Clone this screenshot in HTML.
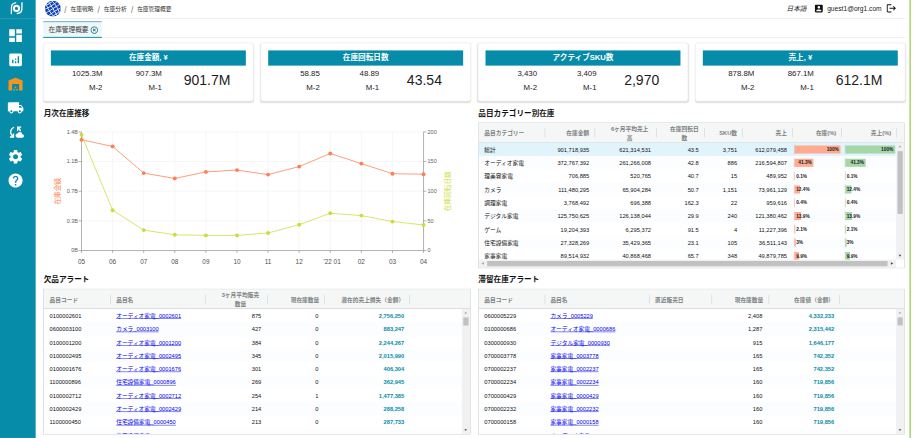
<!DOCTYPE html><html lang="ja"><head><meta charset="utf-8"><title>在庫管理概要</title><style>
*{box-sizing:border-box;margin:0;padding:0}
html,body{width:913px;height:438px;overflow:hidden;background:#fff}
body{font-family:"Liberation Sans", "Noto Sans CJK JP", sans-serif;color:#222;}
#root{position:absolute;left:0;top:0;width:1920px;height:921px;transform:scale(0.475521);transform-origin:0 0;background:#fff;overflow:hidden}
.abs{position:absolute}
#side{position:absolute;left:0;top:0;width:75.3px;height:921px;background:#068ca8}
#side svg{position:absolute;fill:#fff}
.sdiv{position:absolute;left:0;top:38.2px;width:75.3px;height:1px;background:rgba(255,255,255,.28)}
#hdrline{position:absolute;left:84px;top:38.6px;width:1820px;height:1px;background:#dcdcdc}
.bc{position:absolute;top:10px;font-size:12px;line-height:20px;color:#333;white-space:nowrap}
.bc.sl{font-size:17.5px;color:#777;top:10.5px}
#tabline{position:absolute;left:91px;top:78.6px;width:1813px;height:1px;background:#dedede}
#tab{position:absolute;left:91px;top:45px;width:123px;height:35px;background:#edf6f8;border-top:2px solid #62b4c6;transform:translateY(-.4px);border-bottom:2px solid #068ca8;font-size:14px;line-height:31px;padding-left:11px;color:#3c3c3c;white-space:nowrap}
.card{position:absolute;top:90px;width:442px;height:123px;border:1px solid #ededed;border-radius:6px;background:#fff;box-shadow:0 2px 3px rgba(0,0,0,.13)}
.card .h{position:absolute;left:15px;top:14.5px;width:410px;height:32px;background:#068ca8;color:#fff;font-weight:bold;font-size:16px;line-height:31px;text-align:center}
.card .v{position:absolute;font-size:16.5px;line-height:20px;text-align:right;width:110px;white-space:nowrap;color:#222}
.card .big{position:absolute;font-size:29.5px;line-height:34px;text-align:center;width:170px;white-space:nowrap;color:#1d1d1d}
.ttl{position:absolute;font-size:16px;font-weight:bold;line-height:20px;color:#111;white-space:nowrap}
.grid{position:absolute;border:1px solid #bdc3c7;background:#fff;overflow:hidden;font-size:12px}
.ghead{position:absolute;left:0;top:0;right:0;height:41px;background:#f5f7f7;border-bottom:1px solid #bdc3c7}
.hc{position:absolute;top:2px;height:40px;color:#7c8082;font-weight:bold;font-size:12px;line-height:18px;display:flex;align-items:center}
.hc.l{justify-content:flex-start;padding-left:12px}
.hc.r{justify-content:flex-end;padding-right:11.5px}
.hc span{display:block;text-align:center}
.sep{position:absolute;top:11px;width:1px;height:19px;background:#c3c9cc}
.row{position:absolute;left:0;height:28px;line-height:31px;white-space:nowrap}
.row.odd{background:#fcfdfe}
.row.sel{background:#e1f4fc}
.c{position:absolute;top:0;height:28px;overflow:hidden;color:#111;font-size:12px}
.c.l{padding-left:12px;text-align:left}
.c.r{padding-right:11.5px;text-align:right}
.c a{color:#0000ee;text-decoration:underline}
.c.amt{color:#068ca8;font-weight:bold}
.g2 .c.r{padding-right:13.3px}
.g2 .c.r.amt{padding-right:11.3px}
.bar{position:absolute;top:5.5px;height:17px;left:4px}
.bl{position:absolute;top:5.5px;height:17px;line-height:17px;font-size:10px;font-weight:bold;color:#1a1a1a}
.vsb{position:absolute;width:17px;background:#f1f1f1}
.thumb{position:absolute;background:#c1c1c1}
.arr{position:absolute;width:0;height:0;border:3.5px solid transparent}
#gline{position:absolute;left:1912px;top:0;width:3px;height:921px;background:#a4d263;transform:translateX(.5px)}
</style></head><body><div id="root">
<div id="side">
<svg class="abs" style="left:0;top:0;width:75px;height:38px;fill:none" viewBox="0 0 75 38"><circle cx="34.7" cy="17.7" r="5.4" stroke="#fff" stroke-width="4.2"/><path d="M23.9 28.4 L24.2 15 C24.4 10 28 6.5 33 6.1" stroke="#fff" stroke-width="2.7" stroke-linecap="round"/><path d="M46.3 5.7 L46 19.2 C45.8 24.5 41.5 28 36.2 28.4" stroke="#fff" stroke-width="2.7" stroke-linecap="round"/></svg>
<div class="sdiv"></div>
<svg class="abs" style="left:15.4px;top:56.8px;width:35.5px;height:35.5px;" viewBox="0 0 24 24"><path d="M3 13h8V3H3v10zm0 8h8v-6H3v6zm10 0h8V11h-8v10zm0-18v6h8V3h-8z"/></svg>
<svg class="abs" style="left:15.4px;top:107.8px;width:35.5px;height:35.5px;" viewBox="0 0 24 24"><path d="M19 3H5c-1.1 0-2 .9-2 2v14c0 1.1.9 2 2 2h14c1.1 0 2-.9 2-2V5c0-1.1-.9-2-2-2zM9 17H7v-5h2v5zm4 0h-2v-3h2v3zm0-5h-2v-2h2v2zm4 5h-2V7h2v10z"/></svg>
<svg class="abs" style="left:15.4px;top:159.1px;width:35.5px;height:35.5px;fill:#f7941d;" viewBox="0 0 24 24"><path d="M22 21V7L12 3 2 7v14h5v-9h10v9h5zm-11-2H9v2h2v-2zm2-3h-2v2h2v-2zm2 3h-2v2h2v-2z"/></svg>
<svg class="abs" style="left:15.4px;top:209.2px;width:35.5px;height:35.5px;" viewBox="0 0 24 24"><path d="M20 8h-3V4H3c-1.1 0-2 .9-2 2v11h2c0 1.66 1.34 3 3 3s3-1.34 3-3h6c0 1.66 1.34 3 3 3s3-1.34 3-3h2v-5l-3-4zM6 18.5c-.83 0-1.5-.67-1.5-1.5s.67-1.5 1.5-1.5 1.5.67 1.5 1.5-.67 1.5-1.5 1.5zm13.5-9l1.96 2.5H17V9.5h2.5zm-1.5 9c-.83 0-1.5-.67-1.5-1.5s.67-1.5 1.5-1.5 1.5.67 1.5 1.5-.67 1.5-1.5 1.5z"/></svg>
<svg class="abs" style="left:15.4px;top:259.9px;width:35.5px;height:35.5px;" viewBox="0 0 24 24"><path d="M21.5 14.98c-.02 0-.03 0-.05.01C21.2 13.3 19.76 12 18 12c-1.4 0-2.6.83-3.16 2.02C13.26 14.1 12 15.4 12 17c0 1.66 1.34 3 3 3l6.5-.02c1.38 0 2.5-1.12 2.5-2.5s-1.12-2.5-2.5-2.5zM10 4.26v2.09C7.67 7.18 6 9.39 6 12c0 1.77.78 3.34 2 4.44V14h2v6H4v-2h2.73C5.06 16.54 4 14.4 4 12c0-3.73 2.55-6.85 6-7.74zM20 6h-2.73c1.43 1.26 2.41 3.01 2.66 5h-2.02c-.23-1.36-.93-2.55-1.91-3.44V10h-2V4h6v2z"/></svg>
<svg class="abs" style="left:15.4px;top:312.1px;width:35.5px;height:35.5px;" viewBox="0 0 24 24"><path d="M19.14 12.94c.04-.3.06-.61.06-.94 0-.32-.02-.64-.07-.94l2.03-1.58c.18-.14.23-.41.12-.61l-1.92-3.32c-.12-.22-.37-.29-.59-.22l-2.39.96c-.5-.38-1.03-.7-1.62-.94l-.36-2.54c-.04-.24-.24-.41-.48-.41h-3.84c-.24 0-.43.17-.47.41l-.36 2.54c-.59.24-1.13.57-1.62.94l-2.39-.96c-.22-.08-.47 0-.59.22L2.74 8.87c-.12.21-.08.47.12.61l2.03 1.58c-.05.3-.09.63-.09.94s.02.64.07.94l-2.03 1.58c-.18.14-.23.41-.12.61l1.92 3.32c.12.22.37.29.59.22l2.39-.96c.5.38 1.03.7 1.62.94l.36 2.54c.05.24.24.41.48.41h3.84c.24 0 .44-.17.47-.41l.36-2.54c.59-.24 1.13-.56 1.62-.94l2.39.96c.22.08.47 0 .59-.22l1.92-3.32c.12-.22.07-.47-.12-.61l-2.01-1.58zM12 15.6c-1.98 0-3.6-1.62-3.6-3.6s1.62-3.6 3.6-3.6 3.6 1.62 3.6 3.6-1.62 3.6-3.6 3.6z"/></svg>
<svg class="abs" style="left:15.4px;top:362.2px;width:35.5px;height:35.5px;" viewBox="0 0 24 24"><path d="M12 2C6.48 2 2 6.48 2 12s4.48 10 10 10 10-4.48 10-10S17.52 2 12 2zm1 17h-2v-2h2v2zm2.07-7.75l-.9.92C13.45 12.9 13 13.5 13 15h-2v-.5c0-1.1.45-2.1 1.17-2.83l1.24-1.26c.37-.36.59-.86.59-1.41 0-1.1-.9-2-2-2s-2 .9-2 2H8c0-2.21 1.79-4 4-4s4 1.79 4 4c0 .88-.36 1.68-.93 2.25z"/></svg>
</div>
<div id="hdrline"></div>
<svg class="abs" style="left:94px;top:1px;width:34.4px;height:34.4px" viewBox="0 0 34.4 34.4"><defs><clipPath id="gc"><circle cx="17.2" cy="17.2" r="16.7"/></clipPath></defs><circle cx="17.2" cy="17.2" r="16.7" fill="#0f43b6"/><g clip-path="url(#gc)" stroke="#fff" stroke-width="1.8" fill="none" opacity=".9" transform="rotate(-32.0 17.2 17.2)"><path d="M-4 -10.6 C8 0.4 26 0.4 38 -10.6"/><path d="M-4 -1.3 C8 6.0 26 6.0 38 -1.3"/><path d="M-4 7.9 C8 11.6 26 11.6 38 7.9"/><path d="M-4 17.2 C8 17.2 26 17.2 38 17.2"/><path d="M-4 26.5 C8 22.8 26 22.8 38 26.5"/><path d="M-4 35.7 C8 28.4 26 28.4 38 35.7"/><path d="M-4 45.0 C8 34.0 26 34.0 38 45.0"/><path d="M0.8 -4 C-12.0 8 -12.0 26 0.8 38"/><path d="M6.3 -4 C-2.3 8 -2.3 26 6.3 38"/><path d="M11.7 -4 C7.5 8 7.5 26 11.7 38"/><path d="M17.2 -4 C17.2 8 17.2 26 17.2 38"/><path d="M22.7 -4 C26.9 8 26.9 26 22.7 38"/><path d="M28.1 -4 C36.7 8 36.7 26 28.1 38"/><path d="M33.6 -4 C46.4 8 46.4 26 33.6 38"/></g></svg>
<div class="bc sl" style="left:135.0px">/</div><div class="bc" style="left:148.3px">在庫戦略</div>
<div class="bc sl" style="left:204.8px">/</div><div class="bc" style="left:218.3px">在庫分析</div>
<div class="bc sl" style="left:275.4px">/</div><div class="bc" style="left:288.4px">在庫管理概要</div>
<div class="abs" style="left:1654px;top:9px;font-size:14px;line-height:20px;font-style:italic;color:#222;white-space:nowrap">日本語</div>
<svg class="abs" style="left:1711.3px;top:7.0px;width:22px;height:22px;fill:#111;" viewBox="0 0 24 24"><path d="M3 5v14c0 1.1.89 2 2 2h14c1.1 0 2-.9 2-2V5c0-1.1-.9-2-2-2H5c-1.11 0-2 .9-2 2zm12 4c0 1.66-1.34 3-3 3s-3-1.34-3-3 1.34-3 3-3 3 1.34 3 3zm-9 8c0-2 4-3.1 6-3.1s6 1.1 6 3.1v1H6v-1z"/></svg>
<div class="abs" style="left:1739.5px;top:8px;font-size:14px;line-height:20px;color:#222;white-space:nowrap">guest1@org1.com</div>
<svg class="abs" style="left:1863.0px;top:6.3px;width:23px;height:23px;fill:#111;" viewBox="0 0 24 24"><path d="M17 7l-1.41 1.41L18.17 11H8v2h10.17l-2.58 2.58L17 17l5-5zM4 5h8V3H4c-1.1 0-2 .9-2 2v14c0 1.1.9 2 2 2h8v-2H4V5z"/></svg>
<div id="tabline"></div>
<div id="tab">在庫管理概要</div>
<svg class="abs" style="left:188.8px;top:53.5px;width:18.5px;height:18.5px;fill:#1a6b7e;" viewBox="0 0 24 24"><path d="M14.59 8L12 10.59 9.41 8 8 9.41 10.59 12 8 14.59 9.41 16 12 13.41 14.59 16 16 14.59 13.41 12 16 9.41 14.59 8zM12 2C6.47 2 2 6.47 2 12s4.47 10 10 10 10-4.47 10-10S17.53 2 12 2zm0 18c-4.41 0-8-3.59-8-8s3.59-8 8-8 8 3.59 8 8-3.59 8-8 8z"/></svg>
<div class="card" style="left:91px"><div class="h">在庫金額, ¥</div>
<div class="v" style="left:13.5px;top:52px">1025.3M</div><div class="v" style="left:13.5px;top:83px">M-2</div>
<div class="v" style="left:138.5px;top:52px">907.3M</div><div class="v" style="left:138.5px;top:83px">M-1</div>
<div class="big" style="left:258.5px;top:61px">901.7M</div></div>
<div class="card" style="left:548px"><div class="h">在庫回転日数</div>
<div class="v" style="left:13.5px;top:52px">58.85</div><div class="v" style="left:13.5px;top:83px">M-2</div>
<div class="v" style="left:138.5px;top:52px">48.89</div><div class="v" style="left:138.5px;top:83px">M-1</div>
<div class="big" style="left:258.5px;top:61px">43.54</div></div>
<div class="card" style="left:1005px"><div class="h">アクティブSKU数</div>
<div class="v" style="left:13.5px;top:52px">3,430</div><div class="v" style="left:13.5px;top:83px">M-2</div>
<div class="v" style="left:138.5px;top:52px">3,409</div><div class="v" style="left:138.5px;top:83px">M-1</div>
<div class="big" style="left:258.5px;top:61px">2,970</div></div>
<div class="card" style="left:1462px"><div class="h">売上, ¥</div>
<div class="v" style="left:13.5px;top:52px">878.8M</div><div class="v" style="left:13.5px;top:83px">M-2</div>
<div class="v" style="left:138.5px;top:52px">867.1M</div><div class="v" style="left:138.5px;top:83px">M-1</div>
<div class="big" style="left:258.5px;top:61px">612.1M</div></div>
<div class="ttl" style="left:92px;top:228.3px">月次在庫推移</div>
<div class="ttl" style="left:1006px;top:228.3px">品目カテゴリー別在庫</div>
<div class="ttl" style="left:92px;top:577px">欠品アラート</div>
<div class="ttl" style="left:1006px;top:577px">滞留在庫アラート</div>
<svg class="abs" style="left:0;top:0;width:1920px;height:921px;font-family:'Liberation Sans', 'Noto Sans CJK JP', sans-serif" viewBox="0 0 1920 921"><line x1="171.4" x2="890.7" y1="277.4" y2="277.4" stroke="#ebebeb" stroke-width="1"/><line x1="171.4" x2="890.7" y1="339.8" y2="339.8" stroke="#ebebeb" stroke-width="1"/><line x1="171.4" x2="890.7" y1="402.1" y2="402.1" stroke="#ebebeb" stroke-width="1"/><line x1="171.4" x2="890.7" y1="464.5" y2="464.5" stroke="#ebebeb" stroke-width="1"/><line x1="236.8" x2="236.8" y1="277.4" y2="526.9" stroke="#ececec" stroke-width="1"/><line x1="302.2" x2="302.2" y1="277.4" y2="526.9" stroke="#ececec" stroke-width="1"/><line x1="367.6" x2="367.6" y1="277.4" y2="526.9" stroke="#ececec" stroke-width="1"/><line x1="433.0" x2="433.0" y1="277.4" y2="526.9" stroke="#ececec" stroke-width="1"/><line x1="498.4" x2="498.4" y1="277.4" y2="526.9" stroke="#ececec" stroke-width="1"/><line x1="563.7" x2="563.7" y1="277.4" y2="526.9" stroke="#ececec" stroke-width="1"/><line x1="629.1" x2="629.1" y1="277.4" y2="526.9" stroke="#ececec" stroke-width="1"/><line x1="694.5" x2="694.5" y1="277.4" y2="526.9" stroke="#ececec" stroke-width="1"/><line x1="759.9" x2="759.9" y1="277.4" y2="526.9" stroke="#ececec" stroke-width="1"/><line x1="825.3" x2="825.3" y1="277.4" y2="526.9" stroke="#ececec" stroke-width="1"/><path d="M171.4 277.4V526.9H890.7V277.4" fill="none" stroke="#7a7a7a" stroke-width="1.2"/><line x1="165.4" x2="171.4" y1="277.4" y2="277.4" stroke="#7a7a7a" stroke-width="1.2"/><line x1="890.7" x2="896.7" y1="277.4" y2="277.4" stroke="#7a7a7a" stroke-width="1.2"/><text x="163.9" y="281.4" font-size="11.5" fill="#606060" text-anchor="end">1.4B</text><text x="899.2" y="281.4" font-size="11.5" fill="#606060">200</text><line x1="165.4" x2="171.4" y1="339.8" y2="339.8" stroke="#7a7a7a" stroke-width="1.2"/><line x1="890.7" x2="896.7" y1="339.8" y2="339.8" stroke="#7a7a7a" stroke-width="1.2"/><text x="163.9" y="343.8" font-size="11.5" fill="#606060" text-anchor="end">1.1B</text><text x="899.2" y="343.8" font-size="11.5" fill="#606060">150</text><line x1="165.4" x2="171.4" y1="402.1" y2="402.1" stroke="#7a7a7a" stroke-width="1.2"/><line x1="890.7" x2="896.7" y1="402.1" y2="402.1" stroke="#7a7a7a" stroke-width="1.2"/><text x="163.9" y="406.1" font-size="11.5" fill="#606060" text-anchor="end">0.7B</text><text x="899.2" y="406.1" font-size="11.5" fill="#606060">100</text><line x1="165.4" x2="171.4" y1="464.5" y2="464.5" stroke="#7a7a7a" stroke-width="1.2"/><line x1="890.7" x2="896.7" y1="464.5" y2="464.5" stroke="#7a7a7a" stroke-width="1.2"/><text x="163.9" y="468.5" font-size="11.5" fill="#606060" text-anchor="end">0.3B</text><text x="899.2" y="468.5" font-size="11.5" fill="#606060">50</text><line x1="165.4" x2="171.4" y1="526.9" y2="526.9" stroke="#7a7a7a" stroke-width="1.2"/><line x1="890.7" x2="896.7" y1="526.9" y2="526.9" stroke="#7a7a7a" stroke-width="1.2"/><text x="163.9" y="530.9" font-size="11.5" fill="#606060" text-anchor="end">0B</text><text x="899.2" y="530.9" font-size="11.5" fill="#606060">0</text><line x1="171.4" x2="171.4" y1="526.9" y2="531.9" stroke="#7a7a7a" stroke-width="1.2"/><text x="171.4" y="555.4" font-size="13.5" fill="#505050" text-anchor="middle">05</text><line x1="236.8" x2="236.8" y1="526.9" y2="531.9" stroke="#7a7a7a" stroke-width="1.2"/><text x="236.8" y="555.4" font-size="13.5" fill="#505050" text-anchor="middle">06</text><line x1="302.2" x2="302.2" y1="526.9" y2="531.9" stroke="#7a7a7a" stroke-width="1.2"/><text x="302.2" y="555.4" font-size="13.5" fill="#505050" text-anchor="middle">07</text><line x1="367.6" x2="367.6" y1="526.9" y2="531.9" stroke="#7a7a7a" stroke-width="1.2"/><text x="367.6" y="555.4" font-size="13.5" fill="#505050" text-anchor="middle">08</text><line x1="433.0" x2="433.0" y1="526.9" y2="531.9" stroke="#7a7a7a" stroke-width="1.2"/><text x="433.0" y="555.4" font-size="13.5" fill="#505050" text-anchor="middle">09</text><line x1="498.4" x2="498.4" y1="526.9" y2="531.9" stroke="#7a7a7a" stroke-width="1.2"/><text x="498.4" y="555.4" font-size="13.5" fill="#505050" text-anchor="middle">10</text><line x1="563.7" x2="563.7" y1="526.9" y2="531.9" stroke="#7a7a7a" stroke-width="1.2"/><text x="563.7" y="555.4" font-size="13.5" fill="#505050" text-anchor="middle">11</text><line x1="629.1" x2="629.1" y1="526.9" y2="531.9" stroke="#7a7a7a" stroke-width="1.2"/><text x="629.1" y="555.4" font-size="13.5" fill="#505050" text-anchor="middle">12</text><line x1="694.5" x2="694.5" y1="526.9" y2="531.9" stroke="#7a7a7a" stroke-width="1.2"/><text x="698.0" y="555.4" font-size="13.5" fill="#505050" text-anchor="end">'22</text><text x="701.5" y="555.4" font-size="13.5" fill="#505050">01</text><line x1="759.9" x2="759.9" y1="526.9" y2="531.9" stroke="#7a7a7a" stroke-width="1.2"/><text x="759.9" y="555.4" font-size="13.5" fill="#505050" text-anchor="middle">02</text><line x1="825.3" x2="825.3" y1="526.9" y2="531.9" stroke="#7a7a7a" stroke-width="1.2"/><text x="825.3" y="555.4" font-size="13.5" fill="#505050" text-anchor="middle">03</text><line x1="890.7" x2="890.7" y1="526.9" y2="531.9" stroke="#7a7a7a" stroke-width="1.2"/><text x="890.7" y="555.4" font-size="13.5" fill="#505050" text-anchor="middle">04</text><polyline points="171.4,294.0 236.8,307.9 302.2,364.0 367.6,375.2 433.0,361.5 498.4,357.7 563.7,367.2 629.1,350.4 694.5,322.8 759.9,344.0 825.3,365.3 890.7,366.3" fill="none" stroke="#ff7f52" stroke-width="1.6" stroke-linejoin="round"/><circle cx="171.4" cy="294.0" r="4.1" fill="#ff7f52"/><circle cx="236.8" cy="307.9" r="4.1" fill="#ff7f52"/><circle cx="302.2" cy="364.0" r="4.1" fill="#ff7f52"/><circle cx="367.6" cy="375.2" r="4.1" fill="#ff7f52"/><circle cx="433.0" cy="361.5" r="4.1" fill="#ff7f52"/><circle cx="498.4" cy="357.7" r="4.1" fill="#ff7f52"/><circle cx="563.7" cy="367.2" r="4.1" fill="#ff7f52"/><circle cx="629.1" cy="350.4" r="4.1" fill="#ff7f52"/><circle cx="694.5" cy="322.8" r="4.1" fill="#ff7f52"/><circle cx="759.9" cy="344.0" r="4.1" fill="#ff7f52"/><circle cx="825.3" cy="365.3" r="4.1" fill="#ff7f52"/><circle cx="890.7" cy="366.3" r="4.1" fill="#ff7f52"/><polyline points="171.4,283.5 236.8,442.0 302.2,483.9 367.6,493.8 433.0,495.0 498.4,495.0 563.7,490.0 629.1,472.5 694.5,448.4 759.9,453.4 825.3,466.0 890.7,473.0" fill="none" stroke="#cddc39" stroke-width="1.6" stroke-linejoin="round"/><circle cx="171.4" cy="283.5" r="4.1" fill="#cddc39"/><circle cx="236.8" cy="442.0" r="4.1" fill="#cddc39"/><circle cx="302.2" cy="483.9" r="4.1" fill="#cddc39"/><circle cx="367.6" cy="493.8" r="4.1" fill="#cddc39"/><circle cx="433.0" cy="495.0" r="4.1" fill="#cddc39"/><circle cx="498.4" cy="495.0" r="4.1" fill="#cddc39"/><circle cx="563.7" cy="490.0" r="4.1" fill="#cddc39"/><circle cx="629.1" cy="472.5" r="4.1" fill="#cddc39"/><circle cx="694.5" cy="448.4" r="4.1" fill="#cddc39"/><circle cx="759.9" cy="453.4" r="4.1" fill="#cddc39"/><circle cx="825.3" cy="466.0" r="4.1" fill="#cddc39"/><circle cx="890.7" cy="473.0" r="4.1" fill="#cddc39"/><text transform="translate(126.6,402.3) rotate(-90)" font-size="14" fill="#ff7f52" text-anchor="middle">在庫金額</text><text transform="translate(946.1,402.1) rotate(-90)" font-size="14" fill="#cddc39" text-anchor="middle">在庫回転日数</text></svg>
<div class="grid" style="left:1005px;top:257px;width:897px;height:306px;transform:translate(0.5px,0.9px)">
<div class="ghead">
<div class="hc l" style="left:0px;width:139px"><span>品目カテゴリー</span></div>
<div class="sep" style="left:138.5px"></div>
<div class="hc r" style="left:139px;width:105px"><span>在庫金額</span></div>
<div class="sep" style="left:243.5px"></div>
<div class="hc r" style="left:244px;width:130px"><span style="width:90px">6ヶ月平均売上<br>高</span></div>
<div class="sep" style="left:373.5px"></div>
<div class="hc r" style="left:374px;width:100.5px"><span style="width:60.5px">在庫回転日<br>数</span></div>
<div class="sep" style="left:474.0px"></div>
<div class="hc r" style="left:474.5px;width:80.5px"><span>SKU数</span></div>
<div class="sep" style="left:554.5px"></div>
<div class="hc r" style="left:555.0px;width:105px"><span>売上</span></div>
<div class="sep" style="left:659.5px"></div>
<div class="hc r" style="left:660.0px;width:103.5px"><span>在庫(%)</span></div>
<div class="sep" style="left:763.0px"></div>
<div class="hc r" style="left:763.5px;width:115.5px"><span>売上(%)</span></div>
<div class="sep" style="left:878.5px"></div>
</div>
<div class="row sel" style="top:41px;width:878px">
<div class="c l" style="left:0px;width:139px">総計</div>
<div class="c r" style="left:139px;width:105px">901,718,935</div>
<div class="c r" style="left:244px;width:130px">621,314,531</div>
<div class="c r" style="left:374px;width:100.5px">43.5</div>
<div class="c r" style="left:474.5px;width:80.5px">3,751</div>
<div class="c r" style="left:555.0px;width:105px">612,079,458</div>
<div class="c" style="left:660.0px;width:103.5px"><div class="abs" style="left:3.3px;top:3px;width:1px;height:22px;background:#cfd3f3"></div><div class="bar" style="left:4.3px;width:96.7px;background:#ffab91"></div>
<div class="bl" style="left:4.3px;width:96.7px;text-align:right;padding-right:3.5px">100%</div></div>
<div class="c" style="left:763.5px;width:115.5px"><div class="abs" style="left:6.0px;top:3px;width:1px;height:22px;background:#cfd3f3"></div><div class="bar" style="left:7.0px;width:105.0px;background:#a5d6a7"></div>
<div class="bl" style="left:7.0px;width:105.0px;text-align:right;padding-right:3.5px">100%</div></div>
</div>
<div class="row odd" style="top:69px;width:878px">
<div class="c l" style="left:0px;width:139px">オーディオ家電</div>
<div class="c r" style="left:139px;width:105px">372,767,392</div>
<div class="c r" style="left:244px;width:130px">261,266,008</div>
<div class="c r" style="left:374px;width:100.5px">42.8</div>
<div class="c r" style="left:474.5px;width:80.5px">886</div>
<div class="c r" style="left:555.0px;width:105px">216,594,807</div>
<div class="c" style="left:660.0px;width:103.5px"><div class="abs" style="left:3.3px;top:3px;width:1px;height:22px;background:#cfd3f3"></div><div class="bar" style="left:4.3px;width:39.9px;background:#ffab91"></div>
<div class="bl" style="left:4.3px;width:39.9px;text-align:right;padding-right:3.5px">41.3%</div></div>
<div class="c" style="left:763.5px;width:115.5px"><div class="abs" style="left:6.0px;top:3px;width:1px;height:22px;background:#cfd3f3"></div><div class="bar" style="left:7.0px;width:43.4px;background:#a5d6a7"></div>
<div class="bl" style="left:7.0px;width:43.4px;text-align:right;padding-right:3.5px">41.3%</div></div>
</div>
<div class="row" style="top:97px;width:878px">
<div class="c l" style="left:0px;width:139px">理美容家電</div>
<div class="c r" style="left:139px;width:105px">706,885</div>
<div class="c r" style="left:244px;width:130px">520,765</div>
<div class="c r" style="left:374px;width:100.5px">40.7</div>
<div class="c r" style="left:474.5px;width:80.5px">15</div>
<div class="c r" style="left:555.0px;width:105px">489,952</div>
<div class="c" style="left:660.0px;width:103.5px"><div class="abs" style="left:3.3px;top:3px;width:1px;height:22px;background:#cfd3f3"></div><div class="bar" style="left:4.3px;width:0.1px;background:#ffab91"></div>
<div class="bl" style="left:7.8px">0.1%</div></div>
<div class="c" style="left:763.5px;width:115.5px"><div class="abs" style="left:6.0px;top:3px;width:1px;height:22px;background:#cfd3f3"></div><div class="bar" style="left:7.0px;width:0.1px;background:#a5d6a7"></div>
<div class="bl" style="left:10.5px">0.1%</div></div>
</div>
<div class="row odd" style="top:125px;width:878px">
<div class="c l" style="left:0px;width:139px">カメラ</div>
<div class="c r" style="left:139px;width:105px">111,480,295</div>
<div class="c r" style="left:244px;width:130px">65,904,284</div>
<div class="c r" style="left:374px;width:100.5px">50.7</div>
<div class="c r" style="left:474.5px;width:80.5px">1,151</div>
<div class="c r" style="left:555.0px;width:105px">73,961,129</div>
<div class="c" style="left:660.0px;width:103.5px"><div class="abs" style="left:3.3px;top:3px;width:1px;height:22px;background:#cfd3f3"></div><div class="bar" style="left:4.3px;width:12.0px;background:#ffab91"></div>
<div class="bl" style="left:7.8px">12.4%</div></div>
<div class="c" style="left:763.5px;width:115.5px"><div class="abs" style="left:6.0px;top:3px;width:1px;height:22px;background:#cfd3f3"></div><div class="bar" style="left:7.0px;width:13.0px;background:#a5d6a7"></div>
<div class="bl" style="left:10.5px">12.4%</div></div>
</div>
<div class="row" style="top:153px;width:878px">
<div class="c l" style="left:0px;width:139px">調理家電</div>
<div class="c r" style="left:139px;width:105px">3,768,492</div>
<div class="c r" style="left:244px;width:130px">696,388</div>
<div class="c r" style="left:374px;width:100.5px">162.3</div>
<div class="c r" style="left:474.5px;width:80.5px">22</div>
<div class="c r" style="left:555.0px;width:105px">959,616</div>
<div class="c" style="left:660.0px;width:103.5px"><div class="abs" style="left:3.3px;top:3px;width:1px;height:22px;background:#cfd3f3"></div><div class="bar" style="left:4.3px;width:0.4px;background:#ffab91"></div>
<div class="bl" style="left:7.8px">0.4%</div></div>
<div class="c" style="left:763.5px;width:115.5px"><div class="abs" style="left:6.0px;top:3px;width:1px;height:22px;background:#cfd3f3"></div><div class="bar" style="left:7.0px;width:0.4px;background:#a5d6a7"></div>
<div class="bl" style="left:10.5px">0.4%</div></div>
</div>
<div class="row odd" style="top:181px;width:878px">
<div class="c l" style="left:0px;width:139px">デジタル家電</div>
<div class="c r" style="left:139px;width:105px">125,750,625</div>
<div class="c r" style="left:244px;width:130px">126,138,044</div>
<div class="c r" style="left:374px;width:100.5px">29.9</div>
<div class="c r" style="left:474.5px;width:80.5px">240</div>
<div class="c r" style="left:555.0px;width:105px">121,380,462</div>
<div class="c" style="left:660.0px;width:103.5px"><div class="abs" style="left:3.3px;top:3px;width:1px;height:22px;background:#cfd3f3"></div><div class="bar" style="left:4.3px;width:13.4px;background:#ffab91"></div>
<div class="bl" style="left:7.8px">13.9%</div></div>
<div class="c" style="left:763.5px;width:115.5px"><div class="abs" style="left:6.0px;top:3px;width:1px;height:22px;background:#cfd3f3"></div><div class="bar" style="left:7.0px;width:14.6px;background:#a5d6a7"></div>
<div class="bl" style="left:10.5px">13.9%</div></div>
</div>
<div class="row" style="top:209px;width:878px">
<div class="c l" style="left:0px;width:139px">ゲーム</div>
<div class="c r" style="left:139px;width:105px">19,204,393</div>
<div class="c r" style="left:244px;width:130px">6,295,372</div>
<div class="c r" style="left:374px;width:100.5px">91.5</div>
<div class="c r" style="left:474.5px;width:80.5px">4</div>
<div class="c r" style="left:555.0px;width:105px">11,227,396</div>
<div class="c" style="left:660.0px;width:103.5px"><div class="abs" style="left:3.3px;top:3px;width:1px;height:22px;background:#cfd3f3"></div><div class="bar" style="left:4.3px;width:2.0px;background:#ffab91"></div>
<div class="bl" style="left:7.8px">2.1%</div></div>
<div class="c" style="left:763.5px;width:115.5px"><div class="abs" style="left:6.0px;top:3px;width:1px;height:22px;background:#cfd3f3"></div><div class="bar" style="left:7.0px;width:2.2px;background:#a5d6a7"></div>
<div class="bl" style="left:10.5px">2.1%</div></div>
</div>
<div class="row odd" style="top:237px;width:878px">
<div class="c l" style="left:0px;width:139px">住宅設備家電</div>
<div class="c r" style="left:139px;width:105px">27,328,269</div>
<div class="c r" style="left:244px;width:130px">35,429,365</div>
<div class="c r" style="left:374px;width:100.5px">23.1</div>
<div class="c r" style="left:474.5px;width:80.5px">105</div>
<div class="c r" style="left:555.0px;width:105px">36,511,143</div>
<div class="c" style="left:660.0px;width:103.5px"><div class="abs" style="left:3.3px;top:3px;width:1px;height:22px;background:#cfd3f3"></div><div class="bar" style="left:4.3px;width:2.9px;background:#ffab91"></div>
<div class="bl" style="left:7.8px">3%</div></div>
<div class="c" style="left:763.5px;width:115.5px"><div class="abs" style="left:6.0px;top:3px;width:1px;height:22px;background:#cfd3f3"></div><div class="bar" style="left:7.0px;width:3.1px;background:#a5d6a7"></div>
<div class="bl" style="left:10.5px">3%</div></div>
</div>
<div class="row" style="top:265px;width:878px">
<div class="c l" style="left:0px;width:139px">家事家電</div>
<div class="c r" style="left:139px;width:105px">89,514,932</div>
<div class="c r" style="left:244px;width:130px">40,868,468</div>
<div class="c r" style="left:374px;width:100.5px">65.7</div>
<div class="c r" style="left:474.5px;width:80.5px">348</div>
<div class="c r" style="left:555.0px;width:105px">49,879,785</div>
<div class="c" style="left:660.0px;width:103.5px"><div class="abs" style="left:3.3px;top:3px;width:1px;height:22px;background:#cfd3f3"></div><div class="bar" style="left:4.3px;width:9.6px;background:#ffab91"></div>
<div class="bl" style="left:7.8px">9.9%</div></div>
<div class="c" style="left:763.5px;width:115.5px"><div class="abs" style="left:6.0px;top:3px;width:1px;height:22px;background:#cfd3f3"></div><div class="bar" style="left:7.0px;width:10.4px;background:#a5d6a7"></div>
<div class="bl" style="left:10.5px">9.9%</div></div>
</div>
<div class="vsb" style="left:878px;top:41px;height:246px"><div class="arr" style="left:5px;top:6px;border-bottom:4.5px solid #a3a3a3;border-top:0"></div><div class="thumb" style="left:3px;width:11px;top:17.5px;height:132.5px"></div><div class="arr" style="left:5px;top:235.5px;border-top:4.5px solid #505050;border-bottom:0"></div></div>
<div class="abs" style="left:0;top:287px;width:895px;height:17px;background:#f1f1f1"><div class="arr" style="left:6px;top:5px;border-right:5px solid #a3a3a3;border-left:0"></div><div class="thumb" style="left:17.5px;top:3px;height:11px;width:842.5px"></div><div class="arr" style="left:867px;top:5px;border-left:5px solid #505050;border-right:0"></div><div class="abs" style="left:878px;top:0;width:17px;height:17px;background:#fff"></div></div>
</div>
<div class="grid g2" style="left:91px;top:607px;width:898px;height:306px;transform:translate(0.3px,0.5px)">
<div class="ghead">
<div class="hc l" style="left:0px;width:140px"><span>品目コード</span></div>
<div class="sep" style="left:139.5px"></div>
<div class="hc l" style="left:140px;width:199px"><span>品目名</span></div>
<div class="sep" style="left:338.5px"></div>
<div class="hc r" style="left:339px;width:131.5px"><span style="width:91.5px">3ヶ月平均販売<br>数量</span></div>
<div class="sep" style="left:470.0px"></div>
<div class="hc r" style="left:470.5px;width:120px"><span>現在庫数量</span></div>
<div class="sep" style="left:590.0px"></div>
<div class="hc r" style="left:590.5px;width:178.5px"><span>潜在的売上損失（金額）</span></div>
<div class="sep" style="left:768.5px"></div>
</div>
<div class="row" style="top:41px;width:879px">
<div class="c l" style="left:0px;width:140px">0100002601</div>
<div class="c l" style="left:140px;width:199px"><a>オーディオ家電_0002601</a></div>
<div class="c r" style="left:339px;width:131.5px">875</div>
<div class="c r" style="left:470.5px;width:120px">0</div>
<div class="c r amt" style="left:590.5px;width:178.5px">2,756,250</div>
</div>
<div class="row odd" style="top:69px;width:879px">
<div class="c l" style="left:0px;width:140px">0600003100</div>
<div class="c l" style="left:140px;width:199px"><a>カメラ_0003100</a></div>
<div class="c r" style="left:339px;width:131.5px">427</div>
<div class="c r" style="left:470.5px;width:120px">0</div>
<div class="c r amt" style="left:590.5px;width:178.5px">883,247</div>
</div>
<div class="row" style="top:97px;width:879px">
<div class="c l" style="left:0px;width:140px">0100001200</div>
<div class="c l" style="left:140px;width:199px"><a>オーディオ家電_0001200</a></div>
<div class="c r" style="left:339px;width:131.5px">384</div>
<div class="c r" style="left:470.5px;width:120px">0</div>
<div class="c r amt" style="left:590.5px;width:178.5px">2,244,267</div>
</div>
<div class="row odd" style="top:125px;width:879px">
<div class="c l" style="left:0px;width:140px">0100002495</div>
<div class="c l" style="left:140px;width:199px"><a>オーディオ家電_0002495</a></div>
<div class="c r" style="left:339px;width:131.5px">345</div>
<div class="c r" style="left:470.5px;width:120px">0</div>
<div class="c r amt" style="left:590.5px;width:178.5px">2,015,990</div>
</div>
<div class="row" style="top:153px;width:879px">
<div class="c l" style="left:0px;width:140px">0100001676</div>
<div class="c l" style="left:140px;width:199px"><a>オーディオ家電_0001676</a></div>
<div class="c r" style="left:339px;width:131.5px">301</div>
<div class="c r" style="left:470.5px;width:120px">0</div>
<div class="c r amt" style="left:590.5px;width:178.5px">406,304</div>
</div>
<div class="row odd" style="top:181px;width:879px">
<div class="c l" style="left:0px;width:140px">1100000896</div>
<div class="c l" style="left:140px;width:199px"><a>住宅設備家電_0000896</a></div>
<div class="c r" style="left:339px;width:131.5px">269</div>
<div class="c r" style="left:470.5px;width:120px">0</div>
<div class="c r amt" style="left:590.5px;width:178.5px">362,945</div>
</div>
<div class="row" style="top:209px;width:879px">
<div class="c l" style="left:0px;width:140px">0100002712</div>
<div class="c l" style="left:140px;width:199px"><a>オーディオ家電_0002712</a></div>
<div class="c r" style="left:339px;width:131.5px">254</div>
<div class="c r" style="left:470.5px;width:120px">1</div>
<div class="c r amt" style="left:590.5px;width:178.5px">1,477,385</div>
</div>
<div class="row odd" style="top:237px;width:879px">
<div class="c l" style="left:0px;width:140px">0100002429</div>
<div class="c l" style="left:140px;width:199px"><a>オーディオ家電_0002429</a></div>
<div class="c r" style="left:339px;width:131.5px">214</div>
<div class="c r" style="left:470.5px;width:120px">0</div>
<div class="c r amt" style="left:590.5px;width:178.5px">288,258</div>
</div>
<div class="row" style="top:265px;width:879px">
<div class="c l" style="left:0px;width:140px">1100000450</div>
<div class="c l" style="left:140px;width:199px"><a>住宅設備家電_0000450</a></div>
<div class="c r" style="left:339px;width:131.5px">213</div>
<div class="c r" style="left:470.5px;width:120px">0</div>
<div class="c r amt" style="left:590.5px;width:178.5px">287,733</div>
</div>
<div class="row odd" style="top:293px;width:879px">
<div class="c l" style="left:0px;width:140px">1100000460</div>
<div class="c l" style="left:140px;width:199px"><a>住宅設備家電_0000460</a></div>
<div class="c r" style="left:339px;width:131.5px">209</div>
<div class="c r" style="left:470.5px;width:120px">0</div>
<div class="c r amt" style="left:590.5px;width:178.5px">282,375</div>
</div>
<div class="vsb" style="left:879px;top:41px;height:263px"><div class="arr" style="left:5px;top:6px;border-bottom:4.5px solid #a3a3a3;border-top:0"></div><div class="thumb" style="left:3px;width:11px;top:17.5px;height:17px"></div><div class="arr" style="left:5px;top:252.5px;border-top:4.5px solid #505050;border-bottom:0"></div></div>
</div>
<div class="grid g2" style="left:1005px;top:607px;width:897px;height:306px;transform:translate(0.5px,0.5px)">
<div class="ghead">
<div class="hc l" style="left:0px;width:139px"><span>品目コード</span></div>
<div class="sep" style="left:138.5px"></div>
<div class="hc l" style="left:139px;width:220px"><span>品目名</span></div>
<div class="sep" style="left:358.5px"></div>
<div class="hc l" style="left:359px;width:131px"><span>直近販売日</span></div>
<div class="sep" style="left:489.5px"></div>
<div class="hc r" style="left:490px;width:120px"><span>現在庫数量</span></div>
<div class="sep" style="left:609.5px"></div>
<div class="hc r" style="left:610px;width:149px"><span>在庫値（金額）</span></div>
<div class="sep" style="left:758.5px"></div>
</div>
<div class="row" style="top:41px;width:878px">
<div class="c l" style="left:0px;width:139px">0600005229</div>
<div class="c l" style="left:139px;width:220px"><a>カメラ_0005229</a></div>
<div class="c l" style="left:359px;width:131px"></div>
<div class="c r" style="left:490px;width:120px">2,408</div>
<div class="c r amt" style="left:610px;width:149px">4,332,233</div>
</div>
<div class="row odd" style="top:69px;width:878px">
<div class="c l" style="left:0px;width:139px">0100000686</div>
<div class="c l" style="left:139px;width:220px"><a>オーディオ家電_0000686</a></div>
<div class="c l" style="left:359px;width:131px"></div>
<div class="c r" style="left:490px;width:120px">1,287</div>
<div class="c r amt" style="left:610px;width:149px">2,315,442</div>
</div>
<div class="row" style="top:97px;width:878px">
<div class="c l" style="left:0px;width:139px">0300000930</div>
<div class="c l" style="left:139px;width:220px"><a>デジタル家電_0000930</a></div>
<div class="c l" style="left:359px;width:131px"></div>
<div class="c r" style="left:490px;width:120px">915</div>
<div class="c r amt" style="left:610px;width:149px">1,646,177</div>
</div>
<div class="row odd" style="top:125px;width:878px">
<div class="c l" style="left:0px;width:139px">0700003778</div>
<div class="c l" style="left:139px;width:220px"><a>家事家電_0003778</a></div>
<div class="c l" style="left:359px;width:131px"></div>
<div class="c r" style="left:490px;width:120px">165</div>
<div class="c r amt" style="left:610px;width:149px">742,352</div>
</div>
<div class="row" style="top:153px;width:878px">
<div class="c l" style="left:0px;width:139px">0700002237</div>
<div class="c l" style="left:139px;width:220px"><a>家事家電_0002237</a></div>
<div class="c l" style="left:359px;width:131px"></div>
<div class="c r" style="left:490px;width:120px">165</div>
<div class="c r amt" style="left:610px;width:149px">742,352</div>
</div>
<div class="row odd" style="top:181px;width:878px">
<div class="c l" style="left:0px;width:139px">0700002234</div>
<div class="c l" style="left:139px;width:220px"><a>家事家電_0002234</a></div>
<div class="c l" style="left:359px;width:131px"></div>
<div class="c r" style="left:490px;width:120px">160</div>
<div class="c r amt" style="left:610px;width:149px">719,856</div>
</div>
<div class="row" style="top:209px;width:878px">
<div class="c l" style="left:0px;width:139px">0700000429</div>
<div class="c l" style="left:139px;width:220px"><a>家事家電_0000429</a></div>
<div class="c l" style="left:359px;width:131px"></div>
<div class="c r" style="left:490px;width:120px">160</div>
<div class="c r amt" style="left:610px;width:149px">719,856</div>
</div>
<div class="row odd" style="top:237px;width:878px">
<div class="c l" style="left:0px;width:139px">0700002232</div>
<div class="c l" style="left:139px;width:220px"><a>家事家電_0002232</a></div>
<div class="c l" style="left:359px;width:131px"></div>
<div class="c r" style="left:490px;width:120px">160</div>
<div class="c r amt" style="left:610px;width:149px">719,856</div>
</div>
<div class="row" style="top:265px;width:878px">
<div class="c l" style="left:0px;width:139px">0700000158</div>
<div class="c l" style="left:139px;width:220px"><a>家事家電_0000158</a></div>
<div class="c l" style="left:359px;width:131px"></div>
<div class="c r" style="left:490px;width:120px">160</div>
<div class="c r amt" style="left:610px;width:149px">719,856</div>
</div>
<div class="row odd" style="top:293px;width:878px">
<div class="c l" style="left:0px;width:139px">0100000685</div>
<div class="c l" style="left:139px;width:220px"><a>オーディオ家電_0000685</a></div>
<div class="c l" style="left:359px;width:131px"></div>
<div class="c r" style="left:490px;width:120px">50</div>
<div class="c r amt" style="left:610px;width:149px">300,455</div>
</div>
<div class="vsb" style="left:878px;top:41px;height:263px"><div class="arr" style="left:5px;top:6px;border-bottom:4.5px solid #a3a3a3;border-top:0"></div><div class="thumb" style="left:3px;width:11px;top:17.5px;height:17px"></div><div class="arr" style="left:5px;top:252.5px;border-top:4.5px solid #505050;border-bottom:0"></div></div>
</div>
<div id="gline"></div>
</div></body></html>
